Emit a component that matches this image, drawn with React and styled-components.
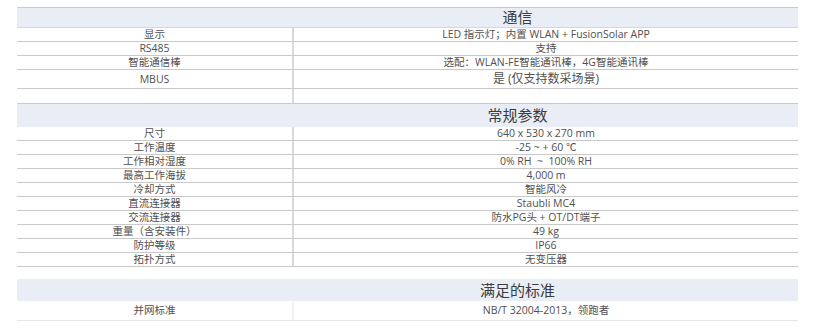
import React from "react";
import styled, { createGlobalStyle } from "styled-components";

const Global = createGlobalStyle`
  html, body { margin: 0; padding: 0; background: #ffffff; }
  body {
    font-family: "Open Sans", "Noto Sans CJK SC", sans-serif;
    color: #505050;
  }
`;

const Page = styled.div`
  padding: 7px 17px 0 17px;
  width: 781px;
  display: flex;
  flex-direction: column;
`;

const Section = styled.section`
  display: flex;
  flex-direction: column;
  margin-top: ${(p) => p.$gap || 0}px;
`;

const Header = styled.div`
  height: ${(p) => p.$h}px;
  box-sizing: border-box;
  background: #e9edf5;
  border-top: ${(p) => (p.$top ? "1px solid #c9c9c9" : "none")};
  border-bottom: ${(p) => (p.$bottom ? "1px solid #d3d6db" : "none")};
  display: flex;
  align-items: center;
  justify-content: center;
  padding-left: 220px;
  font-size: 15px;
  color: #3c3c3c;
  line-height: 1;
`;

const Row = styled.div`
  display: grid;
  grid-template-columns: 277px 1fr;
  height: ${(p) => p.$h || 14}px;
  box-sizing: border-box;
  border-bottom: 1px solid ${(p) => (p.$light ? "#e6e6e6" : "#c9c9c9")};
`;

const Cell = styled.div`
  display: flex;
  align-items: center;
  justify-content: center;
  font-size: ${(p) => p.$size || 10.5}px;
  line-height: 1;
  white-space: pre;
  color: #505050;
`;

const Label = styled(Cell)`
  border-right: 2px solid ${(p) => (p.$light ? "#f2f2f2" : "#d9d9d9")};
`;

const comm = [
  ["显示", "LED 指示灯；内置 WLAN + FusionSolar APP"],
  ["RS485", "支持"],
  ["智能通信棒", "选配：WLAN-FE智能通讯棒，4G智能通讯棒"],
];

const general = [
  ["尺寸", "640 x 530 x 270 mm"],
  ["工作温度", "-25 ~ + 60 ℃"],
  ["工作相对湿度", "0% RH  ~  100% RH"],
  ["最高工作海拔", "4,000 m"],
  ["冷却方式", "智能风冷"],
  ["直流连接器", "Staubli MC4"],
  ["交流连接器", "防水PG头 + OT/DT端子"],
  ["重量（含安装件）", "49 kg"],
  ["防护等级", "IP66"],
  ["拓扑方式", "无变压器"],
];

export default function App() {
  return (
    <>
      <Global />
      <Page>
        <Section>
          <Header $h={21} $top $bottom>
            通信
          </Header>
          {comm.map(([k, v]) => (
            <Row key={k}>
              <Label>{k}</Label>
              <Cell>{v}</Cell>
            </Row>
          ))}
          <Row $h={19}>
            <Label>MBUS</Label>
            <Cell $size={12}>是 (仅支持数采场景)</Cell>
          </Row>
          <Row $h={15}>
            <Label />
            <Cell />
          </Row>
        </Section>
        <Section>
          <Header $h={23}>常规参数</Header>
          {general.map(([k, v]) => (
            <Row key={k}>
              <Label>{k}</Label>
              <Cell>{v}</Cell>
            </Row>
          ))}
        </Section>
        <Section $gap={12}>
          <Header $h={22}>满足的标准</Header>
          <Row $h={20} $light>
            <Label $light>并网标准</Label>
            <Cell>NB/T 32004-2013，领跑者</Cell>
          </Row>
        </Section>
      </Page>
    </>
  );
}
